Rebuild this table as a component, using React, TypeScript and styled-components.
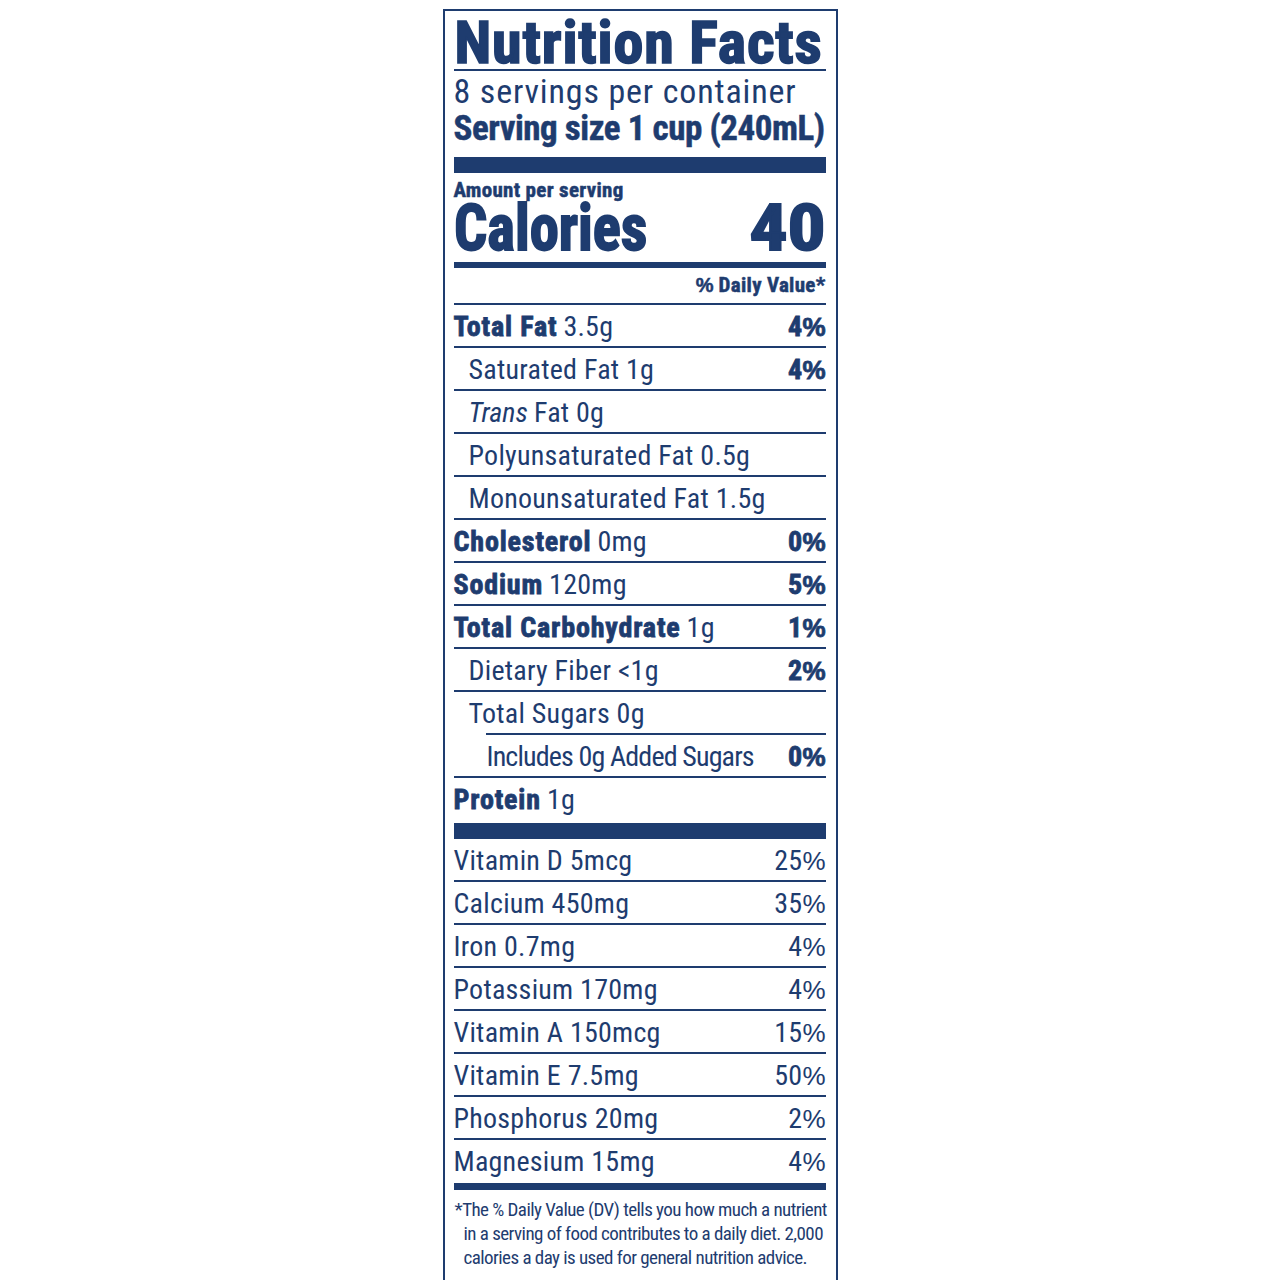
import React from "react";
import styled, { createGlobalStyle, css } from "styled-components";

const NAVY = "#1e3c6f";

const GlobalStyle = createGlobalStyle`
  html, body {
    margin: 0;
    padding: 0;
    background: #ffffff;
  }
  body {
    font-family: "Roboto Condensed", "Liberation Sans", sans-serif;
    color: ${NAVY};
  }
`;

const Page = styled.main`
  display: flex;
  justify-content: center;
  padding-top: 9px;
`;

const Label = styled.section`
  box-sizing: border-box;
  width: 395px;
  height: 1271px;
  border: 2px solid ${NAVY};
  border-bottom: none;
  padding: 0 10px 0 9px;
  display: flex;
  flex-direction: column;
  color: ${NAVY};
  font-family: "Roboto Condensed", "Liberation Sans", sans-serif;
`;

const Title = styled.h1`
  margin: 0;
  font-size: 60px;
  font-weight: 700;
  line-height: 52px;
  padding-top: 6px;
  padding-left: 1px;
  letter-spacing: 0.85px;
  -webkit-text-stroke: 1.6px ${NAVY};
  white-space: nowrap;
  border-bottom: 2px solid ${NAVY};
`;

const Servings = styled.div`
  font-size: 34px;
  font-weight: 400;
  line-height: 41px;
  letter-spacing: 0.85px;
  white-space: nowrap;
`;

const ServingSize = styled.div`
  font-size: 35px;
  font-weight: 700;
  line-height: 34px;
  letter-spacing: -0.45px;
  -webkit-text-stroke: 0.5px ${NAVY};
  white-space: nowrap;
  margin-bottom: 11px;
`;

const Bar = styled.div<{ $h: number }>`
  height: ${(p) => p.$h}px;
  background: ${NAVY};
  flex: none;
`;

const AmountLabel = styled.div`
  font-size: 21px;
  font-weight: 700;
  line-height: 34px;
  letter-spacing: 0.3px;
  -webkit-text-stroke: 0.5px ${NAVY};
`;

const CaloriesRow = styled.div`
  display: flex;
  justify-content: space-between;
  align-items: baseline;
  font-size: 65px;
  font-weight: 700;
  line-height: 42px;
  -webkit-text-stroke: 1.8px ${NAVY};
  margin-bottom: 13px;
`;

const CaloriesWord = styled.span`
  display: inline-block;
  transform: scaleX(0.9);
  transform-origin: left center;
`;

const CaloriesValue = styled.span`
  display: inline-block;
  transform: scaleX(1.16);
  transform-origin: right center;
`;

const DVHeader = styled.div`
  text-align: right;
  font-size: 21px;
  font-weight: 700;
  line-height: 35px;
  letter-spacing: 0.3px;
  -webkit-text-stroke: 0.5px ${NAVY};
  border-bottom: 2px solid ${NAVY};
`;

const ruleFull = css`
  border-bottom: 2px solid ${NAVY};
`;

const ruleInset = (inset: number) => css`
  background: linear-gradient(${NAVY}, ${NAVY}) no-repeat right bottom /
    calc(100% - ${inset}px) 2px;
`;

const NutrientRow = styled.div<{
  $indent?: number;
  $ruleInset?: number;
  $last?: boolean;
  $h?: number;
}>`
  box-sizing: border-box;
  height: ${(p) => p.$h ?? 43}px;
  display: flex;
  align-items: baseline;
  justify-content: space-between;
  padding-top: 2px;
  padding-left: ${(p) => p.$indent ?? 0}px;
  font-size: 28px;
  line-height: 39px;
  white-space: nowrap;
  ${(p) => (p.$last ? "" : p.$ruleInset ? ruleInset(p.$ruleInset) : ruleFull)}
`;

const Name = styled.span`
  font-weight: 700;
  letter-spacing: 0.85px;
  -webkit-text-stroke: 0.8px ${NAVY};
`;

const Amount = styled.span<{ $tight?: boolean }>`
  font-weight: 400;
  letter-spacing: ${(p) => (p.$tight ? "-0.85px" : "0.25px")};
`;

const Italic = styled.em`
  font-style: italic;
`;

const Left = styled.span`
  display: inline-flex;
  gap: 6px;
  align-items: baseline;
`;

const Percent = styled.span<{ $bold?: boolean }>`
  font-weight: ${(p) => (p.$bold ? 700 : 400)};
  letter-spacing: 0.2px;
  ${(p) => (p.$bold ? css`-webkit-text-stroke: 0.8px ${NAVY};` : "")}
`;

const PctSign = styled.span<{ $size?: number }>`
  font-family: "Liberation Sans", "Roboto Condensed", sans-serif;
  font-size: ${(p) => p.$size ?? 26}px;
  letter-spacing: 0;
`;

const Footnote = styled.p`
  margin: 0;
  padding-top: 8px;
  padding-left: 10px;
  text-indent: -9px;
  font-size: 19px;
  line-height: 24px;
  letter-spacing: -0.55px;
  white-space: nowrap;
`;

type Nutrient = {
  name?: string;
  nameItalic?: string;
  amount: string;
  dv?: string;
  indent?: number;
  ruleInset?: number;
  tight?: boolean;
};

const nutrients: Nutrient[] = [
  { name: "Total Fat", amount: "3.5g", dv: "4" },
  { amount: "Saturated Fat 1g", dv: "4", indent: 15 },
  { nameItalic: "Trans", amount: "Fat 0g", indent: 15 },
  { amount: "Polyunsaturated Fat 0.5g", indent: 15 },
  { amount: "Monounsaturated Fat 1.5g", indent: 15 },
  { name: "Cholesterol", amount: "0mg", dv: "0" },
  { name: "Sodium", amount: "120mg", dv: "5" },
  { name: "Total Carbohydrate", amount: "1g", dv: "1" },
  { amount: "Dietary Fiber <1g", dv: "2", indent: 15 },
  { amount: "Total Sugars 0g", indent: 15, ruleInset: 32 },
  { amount: "Includes 0g Added Sugars", dv: "0", indent: 33, tight: true },
];

const vitamins: [string, string][] = [
  ["Vitamin D 5mcg", "25"],
  ["Calcium 450mg", "35"],
  ["Iron 0.7mg", "4"],
  ["Potassium 170mg", "4"],
  ["Vitamin A 150mcg", "15"],
  ["Vitamin E 7.5mg", "50"],
  ["Phosphorus 20mg", "2"],
  ["Magnesium 15mg", "4"],
];

export default function App() {
  return (
    <>
      <GlobalStyle />
      <Page>
        <Label>
          <Title>Nutrition Facts</Title>
          <Servings>8 servings per container</Servings>
          <ServingSize>Serving size 1 cup (240mL)</ServingSize>
          <Bar $h={16} />
          <AmountLabel>Amount per serving</AmountLabel>
          <CaloriesRow>
            <CaloriesWord>Calories</CaloriesWord>
            <CaloriesValue>40</CaloriesValue>
          </CaloriesRow>
          <Bar $h={6} />
          <DVHeader>
            <PctSign $size={20}>%</PctSign> Daily Value*
          </DVHeader>
          {nutrients.map((n, i) => (
            <NutrientRow key={i} $indent={n.indent} $ruleInset={n.ruleInset}>
              <Left>
                {n.name && <Name>{n.name}</Name>}
                {n.nameItalic && <Italic>{n.nameItalic}</Italic>}
                <Amount $tight={n.tight}>{n.amount}</Amount>
              </Left>
              {n.dv && (
                <Percent $bold>
                  {n.dv}
                  <PctSign>%</PctSign>
                </Percent>
              )}
            </NutrientRow>
          ))}
          <NutrientRow $last $h={45}>
            <Left>
              <Name>Protein</Name>
              <Amount>1g</Amount>
            </Left>
          </NutrientRow>
          <Bar $h={16} />
          {vitamins.map(([label, dv], i) => (
            <NutrientRow key={label} $last={i === vitamins.length - 1}>
              <Amount>{label}</Amount>
              <Percent>
                {dv}
                <PctSign>%</PctSign>
              </Percent>
            </NutrientRow>
          ))}
          <Bar $h={7} />
          <Footnote>
            *The % Daily Value (DV) tells you how much a nutrient
            <br />
            in a serving of food contributes to a daily diet. 2,000
            <br />
            calories a day is used for general nutrition advice.
          </Footnote>
        </Label>
      </Page>
    </>
  );
}
